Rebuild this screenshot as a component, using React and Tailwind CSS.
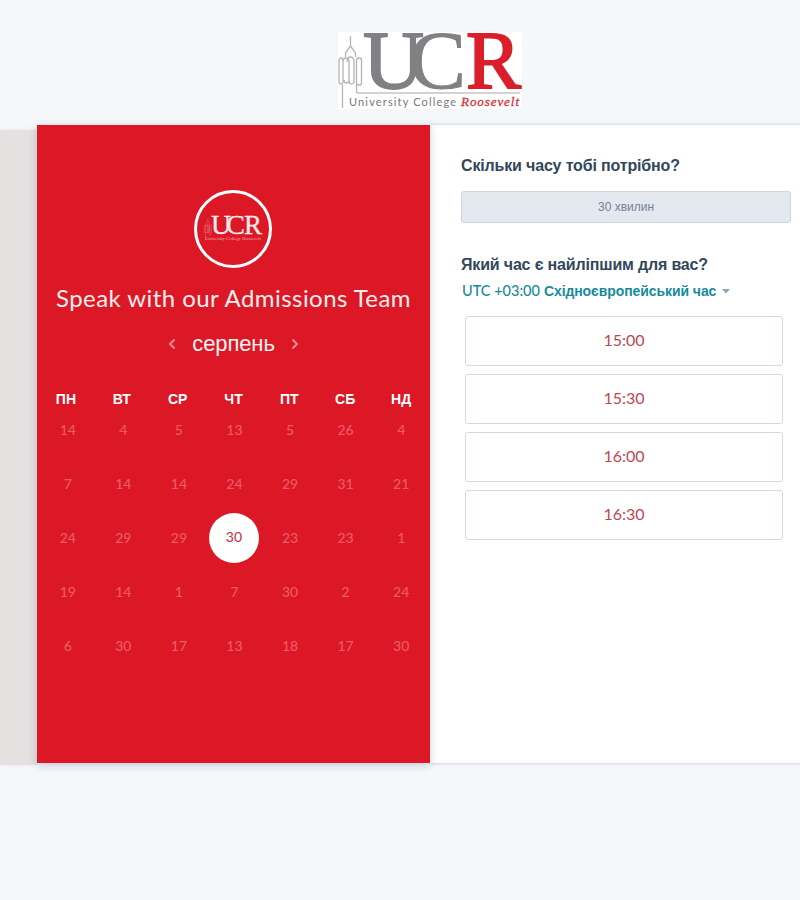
import React from "react";

const WEEKDAYS = ["ПН", "ВТ", "СР", "ЧТ", "ПТ", "СБ", "НД"];

const WEEKS = [
  [14, 4, 5, 13, 5, 26, 4],
  [7, 14, 14, 24, 29, 31, 21],
  [24, 29, 29, 30, 23, 23, 1],
  [19, 14, 1, 7, 30, 2, 24],
  [6, 30, 17, 13, 18, 17, 30],
];

const TIMES = ["15:00", "15:30", "16:00", "16:30"];

function Tower() {
  return (
    <g fill="none" stroke="currentColor" strokeWidth="1.300">
      <path d="M12.500 4v10l-5 7v4M12.500 14l5 7v4M4.500 76V53M18.500 61V53" />
      <path d="M5 50V29q0-3-2-3t-2 3v20q0 3 2 3t2-3M5 30q0-4 3-4t3 4v18q0 3-2.500 3T6 48M9 30q0-5 3.500-5t3.500 5v18q0 4-2.500 4T11 48M16 30v21" />
      <rect x="18.500" y="26" width="5" height="27" rx="2.200" />
    </g>
  );
}

function Logo() {
  return (
    <svg width="184" height="77" viewBox="0 0 184 77" className="overflow-visible bg-white">
      <g className="text-[#b4b4b6]">
        <Tower />
        <path d="M19 61h163" stroke="#a7a7a9" strokeWidth="1" />
      </g>
      <g fontFamily="'Liberation Serif', serif" fontSize="82">
        <text x="25" y="56" textLength="61" lengthAdjust="spacingAndGlyphs" fill="#808184" stroke="#808184" strokeWidth="1.800">U</text>
        <text x="71" y="56" textLength="57" lengthAdjust="spacingAndGlyphs" fill="#808184" stroke="#808184" strokeWidth="1">C</text>
        <text x="128" y="56" textLength="55" lengthAdjust="spacingAndGlyphs" fill="#da1f2b" stroke="#da1f2b" strokeWidth="1.800">R</text>
      </g>
      <text x="11" y="73.500" fontFamily="Lato, sans-serif" fontSize="11" textLength="107" fill="#77787b">University College</text>
      <text x="123" y="73.500" fontFamily="'Liberation Serif', serif" fontStyle="italic" fontSize="13" textLength="58" fill="#d5303c" stroke="#d5303c" strokeWidth="0.300">Roosevelt</text>
    </svg>
  );
}

function Badge() {
  return (
    <div className="mr-0.5 flex h-[78px] w-[78px] items-center justify-center rounded-full border-3 border-white">
      <svg width="60" height="30" viewBox="0 0 60 30" className="overflow-visible">
        <g transform="translate(1 3) scale(0.31)" className="text-[#f08a90]">
          <Tower />
        </g>
        <g fontFamily="'Liberation Serif', serif" fontSize="27" fill="#fde9ea" stroke="#fde9ea" strokeWidth="0.300">
          <text x="8" y="20" textLength="20" lengthAdjust="spacingAndGlyphs">U</text>
          <text x="23" y="20" textLength="19" lengthAdjust="spacingAndGlyphs">C</text>
          <text x="41" y="20" textLength="18" lengthAdjust="spacingAndGlyphs">R</text>
        </g>
        <text x="2" y="25.500" fontFamily="'Liberation Serif', serif" fontSize="5" textLength="56" fill="#f4a3a8">University College Roosevelt</text>
      </svg>
    </div>
  );
}

function Chevron({ d }) {
  return (
    <svg width="8" height="12" viewBox="0 0 8 12" fill="none" stroke="#f08a90" strokeWidth="2">
      <path d={d} />
    </svg>
  );
}

function Calendar() {
  return (
    <section className="flex h-[638px] w-[393px] shrink-0 flex-col items-center bg-[#dc1826] pt-[65px] shadow-[0_2px_8px_rgba(60,60,80,0.25)]">
      <Badge />
      <h1 className="mt-[14px] h-8 font-[Lato] text-2xl leading-8 tracking-[0.44px] whitespace-nowrap text-[#fdeeee]">
        Speak with our Admissions Team
      </h1>
      <div className="mt-[14px] flex h-8 items-center gap-4">
        <Chevron d="M6.500 1.500L2 6l4.500 4.500" />
        <span className="font-['Liberation_Sans'] text-[22px] leading-8 tracking-[-0.1px] text-[#fff3f3]">серпень</span>
        <Chevron d="M1.500 1.500L6 6l-4.500 4.500" />
      </div>
      <div className="mt-[29px] grid w-[391px] grid-cols-7 text-center font-['Liberation_Sans'] text-sm leading-5 font-bold text-white">
        {WEEKDAYS.map((d) => (
          <span key={d}>{d}</span>
        ))}
      </div>
      <div className="mt-[-6px] ml-0.5 grid w-[389px] grid-cols-7 font-[Lato] text-sm">
        {WEEKS.flat().map((n, i) =>
          i === 17 ? (
            <div key={i} className="flex h-[54px] items-center justify-center">
              <span className="mr-px mb-px flex h-[50px] w-[50px] items-center justify-center rounded-full bg-white pb-0.5 text-[#c52e3d]">{n}</span>
            </div>
          ) : (
            <div key={i} className="flex h-[54px] items-center justify-center font-medium text-[#ec5a63]">{n}</div>
          )
        )}
      </div>
    </section>
  );
}

function TimePicker() {
  return (
    <section className="flex h-[638px] w-[370px] shrink-0 flex-col bg-white pt-[31px] pl-[31px] font-['Liberation_Sans'] shadow-[0_0_3px_rgba(60,60,80,0.3)]">
      <h2 className="text-base leading-5 font-bold tracking-[-0.16px] text-[#33475b]">Скільки часу тобі потрібно?</h2>
      <button className="mt-[15px] h-8 w-[330px] rounded-[3px] border border-[#cbd6e2] bg-[#e4e8ef] text-xs text-[#73849a]">
        30 хвилин
      </button>
      <h2 className="mt-8 text-base leading-5 font-bold tracking-[-0.17px] text-[#33475b]">Який час є найліпшим для вас?</h2>
      <div className="mt-1.5 flex h-5 items-center pl-px whitespace-nowrap text-[#178b9d]">
        <span className="mr-1 font-[Lato] text-[14.5px] leading-5 font-medium">UTC +03:00</span>
        <span className="text-sm leading-5 font-bold tracking-[-0.08px]">Східноєвропейський час</span>
        <svg className="ml-1.5" width="8" height="5" viewBox="0 0 8 5" fill="#8ba5b4">
          <path d="M0 0h8L4 4.500z" />
        </svg>
      </div>
      <div className="mt-[15px] flex flex-col gap-2 pl-1">
        {TIMES.map((t) => (
          <button key={t} className="h-[50px] w-[318px] rounded-[3px] border border-[#d2d9e2] bg-white pb-0.5 font-[Lato] text-base text-[#bd4754]">
            {t}
          </button>
        ))}
      </div>
    </section>
  );
}

export default function App() {
  return (
    <div className="h-[900px] w-[800px] overflow-hidden bg-[#f4f8fb]">
      <header className="flex h-[125px] pt-8 pl-[338px]">
        <Logo />
      </header>
      <main className="flex">
        <div className="mt-[5px] h-[635px] w-[37px] shrink-0 bg-[#e5e1e1] shadow-[0_0_4px_#e9e5ec]" />
        <div className="relative z-10 flex">
          <Calendar />
        </div>
        <TimePicker />
      </main>
    </div>
  );
}
